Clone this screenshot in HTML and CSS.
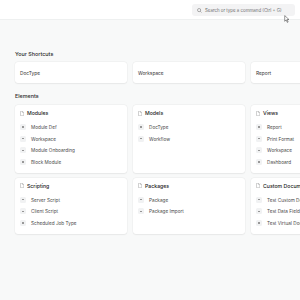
FILE: index.html
```html
<!DOCTYPE html>
<html lang="en">
<head>
    <meta charset="UTF-8">
    <meta name="viewport" content="width=device-width, initial-scale=1.0">
    <title>Build</title>
    <link rel="stylesheet" href="styles.css">
</head>
<body>
    <header class="navbar">
        <div class="search-bar">
            <svg class="search-icon" viewBox="0 0 10 10" width="5" height="5">
                <circle cx="4.2" cy="4.2" r="3.2" fill="none" stroke="#666" stroke-width="1"/>
                <line x1="6.6" y1="6.6" x2="9" y2="9" stroke="#666" stroke-width="1"/>
            </svg>
            <span>Search or type a command (Ctrl + G)</span>
        </div>
        <svg class="cursor" viewBox="0 0 10 14" width="6" height="8">
            <path d="M1 1 L1 11 L3.5 8.5 L5.5 13 L7 12.3 L5 8 L8.5 8 Z" fill="#fff" stroke="#333" stroke-width="0.9"/>
        </svg>
    </header>

    <main class="page">
        <h3 class="section-title">Your Shortcuts</h3>
        <div class="shortcuts">
            <div class="shortcut">DocType</div>
            <div class="shortcut">Workspace</div>
            <div class="shortcut">Report</div>
        </div>

        <h3 class="section-title">Elements</h3>
        <div class="cards">
            <div class="card">
                <div class="card-title"><svg class="doc-icon" viewBox="0 0 8 10" width="4" height="5"><path d="M1 0.6 H5 L7.4 3 V9.4 H1 Z M5 0.6 V3 H7.4" fill="none" stroke="#999" stroke-width="0.9"/></svg>Modules</div>
                <div class="link"><span class="dot"></span>Module Def</div>
                <div class="link"><span class="dot"></span>Workspace</div>
                <div class="link"><span class="dot"></span>Module Onboarding</div>
                <div class="link"><span class="dot"></span>Block Module</div>
            </div>
            <div class="card">
                <div class="card-title"><svg class="doc-icon" viewBox="0 0 8 10" width="4" height="5"><path d="M1 0.6 H5 L7.4 3 V9.4 H1 Z M5 0.6 V3 H7.4" fill="none" stroke="#999" stroke-width="0.9"/></svg>Models</div>
                <div class="link"><span class="dot"></span>DocType</div>
                <div class="link"><span class="dot"></span>Workflow</div>
            </div>
            <div class="card">
                <div class="card-title"><svg class="doc-icon" viewBox="0 0 8 10" width="4" height="5"><path d="M1 0.6 H5 L7.4 3 V9.4 H1 Z M5 0.6 V3 H7.4" fill="none" stroke="#999" stroke-width="0.9"/></svg>Views</div>
                <div class="link"><span class="dot"></span>Report</div>
                <div class="link"><span class="dot"></span>Print Format</div>
                <div class="link"><span class="dot"></span>Workspace</div>
                <div class="link"><span class="dot"></span>Dashboard</div>
            </div>
            <div class="card">
                <div class="card-title"><svg class="doc-icon" viewBox="0 0 8 10" width="4" height="5"><path d="M1 0.6 H5 L7.4 3 V9.4 H1 Z M5 0.6 V3 H7.4" fill="none" stroke="#999" stroke-width="0.9"/></svg>Scripting</div>
                <div class="link"><span class="dot"></span>Server Script</div>
                <div class="link"><span class="dot"></span>Client Script</div>
                <div class="link"><span class="dot"></span>Scheduled Job Type</div>
            </div>
            <div class="card">
                <div class="card-title"><svg class="doc-icon" viewBox="0 0 8 10" width="4" height="5"><path d="M1 0.6 H5 L7.4 3 V9.4 H1 Z M5 0.6 V3 H7.4" fill="none" stroke="#999" stroke-width="0.9"/></svg>Packages</div>
                <div class="link"><span class="dot"></span>Package</div>
                <div class="link"><span class="dot"></span>Package Import</div>
            </div>
            <div class="card">
                <div class="card-title"><svg class="doc-icon" viewBox="0 0 8 10" width="4" height="5"><path d="M1 0.6 H5 L7.4 3 V9.4 H1 Z M5 0.6 V3 H7.4" fill="none" stroke="#999" stroke-width="0.9"/></svg>Custom Documents</div>
                <div class="link"><span class="dot"></span>Test Custom DocType</div>
                <div class="link"><span class="dot"></span>Test Data Fields</div>
                <div class="link"><span class="dot"></span>Test Virtual DocType</div>
            </div>
        </div>
    </main>
</body>
</html>
```

FILE: styles.css
```css
* {
    margin: 0;
    padding: 0;
    box-sizing: border-box;
    font-family: 'Inter', 'Noto Sans', sans-serif;
}
html, body {
    width: 300px;
    height: 300px;
    overflow: hidden;
}
body {
    background: #f8f9f9;
    color: #333;
}
.navbar {
    position: relative;
    height: 20px;
    background: white;
    border-bottom: 1px solid #eef0f0;
    display: flex;
    justify-content: flex-end;
    align-items: flex-start;
    padding: 4px 5px 0 0;
}
.search-bar {
    width: 103px;
    height: 12px;
    background: #f3f3f4;
    border-radius: 3px;
    display: flex;
    align-items: center;
    gap: 3px;
    padding-left: 5px;
    font-size: 4.4px;
    color: #6f6f6f;
    white-space: nowrap;
    overflow: hidden;
}
.search-icon {
    flex-shrink: 0;
}
.cursor {
    position: absolute;
    left: 284px;
    top: 15px;
}
.page {
    padding: 30px 0 0 15px;
}
.section-title {
    font-size: 5.4px;
    font-weight: 500;
    color: #2b2b2b;
    height: 8px;
    line-height: 8px;
}
.shortcuts {
    display: flex;
    gap: 6px;
    margin: 4px 0 9px;
}
.shortcut {
    flex: 0 0 112px;
    height: 21px;
    background: white;
    border-radius: 3px;
    box-shadow: 0 0 0 0.5px rgba(0, 0, 0, 0.04), 0 0.5px 1.5px rgba(0, 0, 0, 0.05);
    font-size: 4.8px;
    color: #333;
    display: flex;
    align-items: center;
    padding-left: 5px;
}
.cards {
    display: grid;
    grid-template-columns: repeat(3, 112px);
    gap: 5px 6px;
    margin-top: 5px;
}
.card {
    background: white;
    border-radius: 3px;
    box-shadow: 0 0 0 0.5px rgba(0, 0, 0, 0.04), 0 0.5px 1.5px rgba(0, 0, 0, 0.05);
    padding: 5px;
    white-space: nowrap;
    overflow: hidden;
}
.card-title {
    display: flex;
    align-items: center;
    gap: 3px;
    font-size: 5.2px;
    font-weight: 500;
    color: #222;
    height: 6px;
    margin-bottom: 5px;
}
.doc-icon {
    flex-shrink: 0;
}
.link {
    display: flex;
    align-items: center;
    gap: 5px;
    height: 11.7px;
    font-size: 4.7px;
    color: #4a4a4a;
}
.dot {
    width: 6px;
    height: 6px;
    border-radius: 1.5px;
    background: #f1f2f3;
    position: relative;
    flex-shrink: 0;
}
.dot::after {
    content: '';
    position: absolute;
    left: 2.3px;
    top: 2.3px;
    width: 1.4px;
    height: 1.4px;
    border-radius: 50%;
    background: #888;
}
```
